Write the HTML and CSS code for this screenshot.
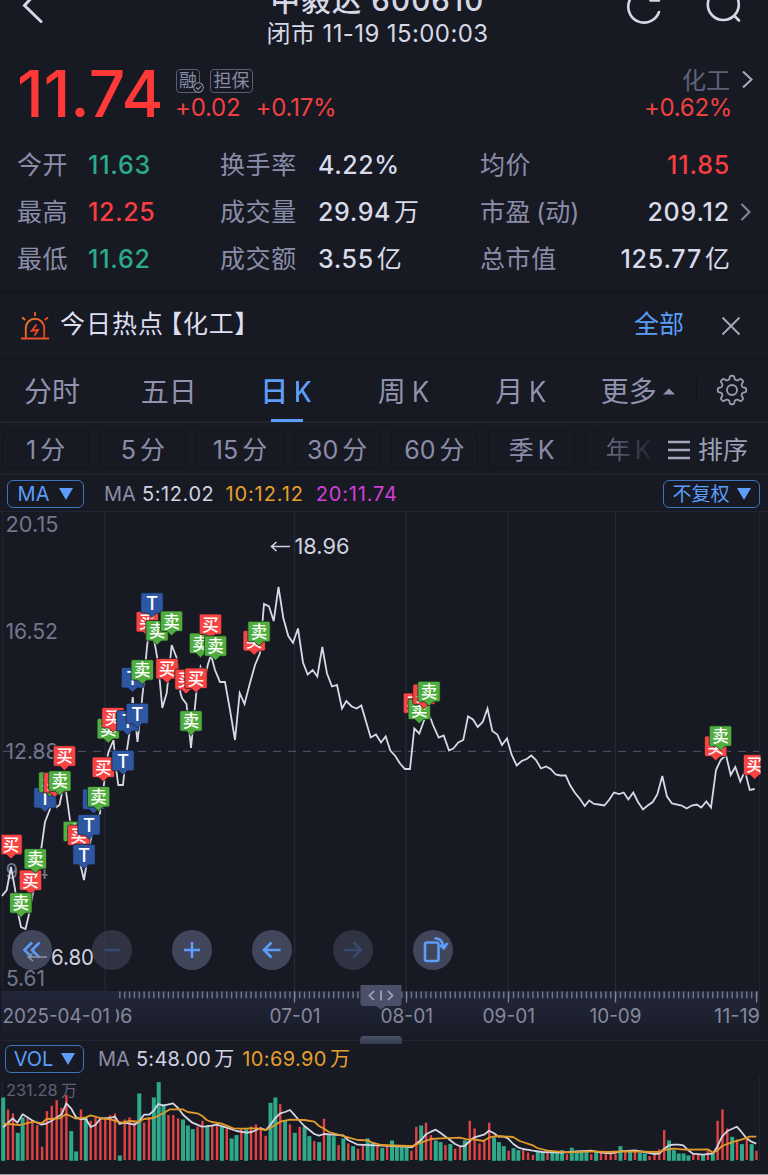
FILE: index.html
```html
<!DOCTYPE html>
<html lang="zh-CN">
<head>
<meta charset="utf-8">
<title>中毅达 600610</title>
<link rel="stylesheet" href="styles.css">
</head>
<body>
<div class="app">
  <header class="topbar">
    <svg class="icon-back" width="24" height="30" viewBox="0 0 24 30"><path d="M19 25.500 L2.500 9.500 L13 -2"/></svg>
    <div class="heading">
      <h1 class="title">中毅达 600610</h1>
      <p class="status">闭市 11-19 15:00:03</p>
    </div>
    <div class="top-actions">
      <svg width="36" height="26" viewBox="0 0 36 26"><path d="M33 12 A15.800 15.800 0 1 1 22 -8.500 M24.500 .500 H33"/></svg>
      <svg width="38" height="26" viewBox="0 0 38 26"><circle cx="19.300" cy="4.500" r="15.500"/><path d="M30.500 16 L35 20.500"/></svg>
    </div>
  </header>

  <section class="quote">
    <div class="price">11.74</div>
    <div class="change">
      <div class="badges">
        <span class="badge badge-margin">融<svg width="11" height="11" viewBox="0 0 11 11"><circle cx="5.500" cy="5.500" r="4.900"/><path d="M3 5.500 L5 7.300 L8 4"/></svg></span>
        <span class="badge">担保</span>
      </div>
      <div class="delta"><span>+0.02</span><span>+0.17%</span></div>
    </div>
    <div class="sector">
      <div class="sector-name">化工</div>
      <div class="sector-delta">+0.62%</div>
    </div>
    <svg class="chev" width="12" height="20" viewBox="0 0 12 20"><path d="M2 1.500 L10.500 9.500 L2 17.500"/></svg>
  </section>

  <section class="stats">
    <span class="label">今开</span><span class="val down">11.63</span>
    <span class="label">换手率</span><span class="val">4.22%</span>
    <span class="label">均价</span><span class="val right up">11.85</span><i></i>
    <span class="label">最高</span><span class="val up">12.25</span>
    <span class="label">成交量</span><span class="val">29.94<b>万</b></span>
    <span class="label">市盈<em>(动)</em></span><span class="val right">209.12</span>
    <svg class="chev chev-dim" width="12" height="20" viewBox="0 0 12 20"><path d="M1.500 2 L9.500 10 L1.500 18"/></svg>
    <span class="label">最低</span><span class="val down">11.62</span>
    <span class="label">成交额</span><span class="val">3.55<b>亿</b></span>
    <span class="label">总市值</span><span class="val right">125.77<b>亿</b></span><i></i>
  </section>

  <section class="hot">
    <svg class="siren" width="28" height="28" viewBox="0 0 28 28">
      <defs><linearGradient id="fire" x1="0" y1="0" x2="1" y2="1"><stop offset="0" stop-color="#f2802c"/><stop offset="1" stop-color="#e63a1c"/></linearGradient></defs>
      <g fill="none" stroke="url(#fire)" stroke-width="1.900">
        <path d="M4.800 26 V16 A9.200 9.200 0 0 1 23.200 16 V26"/>
        <path d="M1 5.500 L4.300 8 M27 5.500 L23.700 8"/>
      </g>
      <path d="M13.100 0 H15 V4 H13.100 Z M0 25.500 H28 V27.400 H0 Z" fill="#e8532a"/>
      <path d="M15.500 12.500 L10.800 18.800 L16.900 18 L13.500 23.500" fill="none" stroke="#f0441f" stroke-width="1.900"/>
    </svg>
    <span class="hot-title">今日热点<span class="bracket">【化工】</span></span>
    <a class="hot-all">全部</a>
    <svg class="close" width="20" height="20" viewBox="0 0 20 20"><path d="M1.500 1.500 L18.500 18.500 M18.500 1.500 L1.500 18.500"/></svg>
  </section>

  <nav class="tabs">
    <a class="tab">分时</a><a class="tab">五日</a><a class="tab active">日<span class="k">K</span></a><a class="tab">周<span class="k">K</span></a><a class="tab">月<span class="k">K</span></a>
    <a class="tab">更多<svg class="caret" width="12" height="7" viewBox="0 0 12 7"><path d="M0 6.500 L6 .500 L12 6.500 Z"/></svg></a>
    <span class="tab-sep"></span>
    <svg class="gear" id="gear" width="32" height="32" viewBox="-16 -16 32 32"><path/><circle r="5"/></svg>
  </nav>

  <nav class="periods">
    <div class="chips">
      <a class="chip">1<span class="k">分</span></a><a class="chip">5<span class="k">分</span></a><a class="chip">15<span class="k">分</span></a><a class="chip">30<span class="k">分</span></a><a class="chip">60<span class="k">分</span></a><a class="chip">季<span class="k">K</span></a><a class="chip chip-fade">年<span class="k">K</span></a>
    </div>
    <a class="sort"><svg width="22" height="20" viewBox="0 0 22 20"><path d="M0 2 H22 M0 10 H22 M0 18 H22"/></svg>排序</a>
  </nav>

  <div class="indicator">
    <span class="pill pill-ma">MA<i class="tri"></i></span>
    <span class="ma-values"><span class="c-label">MA</span><span class="c-white">5:12.02</span><span class="c-orange">10:12.12</span><span class="c-pink">20:11.74</span></span>
    <span class="pill pill-adj">不复权<i class="tri"></i></span>
  </div>

  <section class="kline">
    <svg id="kline" width="768" height="529" viewBox="0 511 768 529"></svg>
    <div class="tools">
      <button class="tool"><svg viewBox="0 0 40 40"><path d="M20 12.500 L12.500 20 L20 27.500 M27.500 12.500 L20 20 L27.500 27.500"/></svg></button>
      <button class="tool off"><svg viewBox="0 0 40 40"><path d="M12.500 20 H27.500"/></svg></button>
      <button class="tool"><svg viewBox="0 0 40 40"><path d="M12 20 H28 M20 12 V28"/></svg></button>
      <button class="tool"><svg viewBox="0 0 40 40"><path d="M28.500 20 H12.500 M19.500 12.500 L12 20 L19.500 27.500"/></svg></button>
      <button class="tool off"><svg viewBox="0 0 40 40"><path d="M11.500 20 H27.500 M20.500 12.500 L28 20 L20.500 27.500"/></svg></button>
      <button class="tool"><svg viewBox="0 0 40 40"><rect x="12" y="12.500" width="13.500" height="18.500" rx="2"/><path d="M21.500 8.300 C27 8.300 30 11.500 30.500 17.500 M27 15 L30.700 18.300 L34.500 13"/></svg></button>
    </div>
    <svg class="low-mark" width="74" height="28" viewBox="0 0 74 28"><path d="M25 12 H6 M11 8 L6 12 L11 16"/><text x="29" y="19.500" textLength="43" lengthAdjust="spacingAndGlyphs">6.80</text></svg>
  </section>

  <section class="volume">
    <span class="grip"></span>
    <div class="indicator vol-head">
      <span class="pill pill-vol">VOL<i class="tri"></i></span>
      <span class="ma-values vol-values"><span class="c-label">MA</span><span class="c-white">5:48.00<b>万</b></span><span class="c-orange">10:69.90<b>万</b></span></span>
    </div>
    <svg id="vol" width="768" height="98" viewBox="0 1076 768 98"></svg>
  </section>
</div>
<script src="chart.js"></script>
</body>
</html>
```

FILE: styles.css
```css
* { box-sizing: border-box; }
body {
  margin: 0;
  background: #171a23;
  color: #d6d8e6;
  font-family: Inter, "Noto Sans CJK SC", sans-serif;
  overflow: hidden;
}
.app { width: 768px; height: 1175px; display: flex; flex-direction: column; border-bottom: 1px solid #98989c; overflow: hidden; }
svg { display: block; flex: none; }
h1, p { margin: 0; font-weight: 400; }
i, em { font-style: normal; }
b { font-weight: inherit; margin-left: 3px; letter-spacing: 0; }

.topbar { height: 56px; flex: none; display: grid; grid-template-columns: 200px 1fr 200px; overflow: hidden; }
.icon-back { margin: -4px 0 0 22px; fill: none; stroke: #d6d8e6; stroke-width: 3; stroke-linecap: round; }
.heading { display: flex; flex-direction: column; align-items: center; margin-left: -13px; }
.title { font-size: 29.500px; line-height: 36px; margin: -18px 0 1px; font-weight: 500; white-space: nowrap; letter-spacing: 1.100px; }
.status { font-size: 24px; line-height: 30px; white-space: nowrap; letter-spacing: .4px; }
.top-actions { display: flex; gap: 42px; padding-left: 58px; }
.top-actions svg { fill: none; stroke: #d6d8e6; stroke-width: 2.6; stroke-linecap: round; }

.quote { height: 82px; flex: none; display: flex; padding: 0 15px 0 17px; }
.price { font-size: 64px; line-height: 76px; font-weight: 500; color: #ff3838; width: 159px; letter-spacing: .1px; white-space: nowrap; }
.change { flex: 1; padding-top: 13px; }
.badges { display: flex; gap: 10px; }
.badge { position: relative; height: 24px; border: 1px solid #5a5d73; border-radius: 4px; color: #8a8ca4; font-size: 18px; line-height: 22px; padding: 0 2.500px; }
.badge-margin { width: 24px; padding: 0 2px; }
.badge-margin svg { position: absolute; right: -5px; bottom: -1px; background: #171a23; border-radius: 6px; fill: none; stroke: #8a8ca4; stroke-width: 1.2; }
.delta { display: flex; gap: 15px; color: #f04040; font-size: 24px; line-height: 29px; letter-spacing: -.2px; margin-left: -1px; }
.sector { text-align: right; padding-top: 11px; margin-right: 9px; line-height: 27px; font-size: 24px; }
.sector-name { color: #60627c; margin-right: 2px; }
.sector-delta { color: #f04040; letter-spacing: -.3px; }
.chev { fill: none; stroke: #a9abbc; stroke-width: 2; margin-top: 14px; }
.chev-dim { margin: 0 0 0 10px; stroke: #85879c; }

.stats { height: 152px; flex: none; padding: 3px 6px 8px 17px; display: grid; grid-template-columns: 71px 132px 98px 162px 100px 150px 32px; grid-template-rows: repeat(3, 47px); align-items: center; }
.label { font-size: 25px; color: #8b8da8; white-space: nowrap; line-height: 36px; letter-spacing: .6px; }
.label em { margin-left: 5px; letter-spacing: 0; }
.val { font-size: 25px; font-weight: 500; color: #d9dbea; white-space: nowrap; line-height: 36px; letter-spacing: .6px; }
.right { text-align: right; letter-spacing: .8px; }
.up { color: #f83e40; }
.down { color: #2cab8b; letter-spacing: .8px; }
.val b { font-weight: 400; }

.hot { height: 69px; flex: none; border-top: 3px solid #12151d; border-bottom: 1px solid #10131a; display: flex; align-items: center; padding: 0 27px 0 21px; }
.hot-title { margin-left: 11px; font-size: 25px; line-height: 36px; margin-top: -4px; color: #dddff0; letter-spacing: 1px; flex: 1; }
.bracket { margin-left: -6.500px; letter-spacing: .6px; }
.hot-all { color: #5b9df8; font-size: 25px; line-height: 36px; margin: -4px 37px 0 0; }
.close { fill: none; stroke: #a6a8b8; stroke-width: 1.9; }

.tabs { height: 64px; flex: none; display: flex; align-items: center; border-bottom: 2px solid #222530; }
.tab { width: 117.300px; height: 64px; line-height: 69px; text-align: center; font-size: 28px; color: #9193ae; position: relative; flex: none; white-space: nowrap; }
.tab:first-child { width: 104px; margin-right: 6px; }
.tab .k { margin-left: 6px; display: inline-block; transform: scaleX(.92); transform-origin: left; margin-right: -2px; }
.tab.active { color: #5b9df8; font-weight: 500; }
.tab.active::after { content: ""; position: absolute; left: 44px; bottom: 0; width: 32px; height: 3px; background: #5b9df8; }
.caret { display: inline-block; vertical-align: 7px; margin-left: 6px; fill: #9193ae; }
.tab-sep { width: 1px; height: 22px; background: #10131a; }
.gear { margin-left: 19px; fill: none; stroke: #9c9eb0; stroke-width: 1.800; }

.periods { height: 52px; flex: none; display: flex; align-items: center; padding-top: 3px; border-bottom: 2px solid #20232e; overflow: hidden; }
.chips { display: flex; gap: 10px; padding-left: 2px; width: 662px; flex: none; overflow: hidden; }
.chip { width: 87.200px; height: 39px; line-height: 39px; flex: none; border: 1px solid #11141b; border-radius: 6px; text-align: center; color: #8b8da8; font-size: 25px; white-space: nowrap; }
.chip .k { margin-left: 4px; }
.chip-fade { -webkit-mask-image: linear-gradient(90deg, #000 0, transparent 85%); mask-image: linear-gradient(90deg, #000 0, transparent 85%); }
.sort { display: flex; align-items: center; gap: 8px; padding-left: 6px; color: #9d9fb5; font-size: 25px; line-height: 36px; }
.sort svg { stroke: #a4a6ba; stroke-width: 2.600; }

.indicator { height: 36px; flex: none; display: flex; align-items: center; padding: 2px 8px 0 7px; }
.pill { height: 28px; border: 1.500px solid #3f74bd; border-radius: 6px; color: #5b9df8; font-size: 20px; display: flex; align-items: center; justify-content: center; }
.tri { border: 7.500px solid transparent; border-top: 12px solid #5b9df8; border-bottom: 0; }
.pill-ma { width: 77px; gap: 10px; }
.pill-adj { width: 97px; gap: 7px; font-size: 19px; line-height: 27px; margin-left: auto; }
.ma-values { display: flex; align-items: baseline; margin-left: 20px; font-size: 20px; line-height: 26px; white-space: nowrap; letter-spacing: .6px; }
.c-label { color: #8b8da8; margin-right: 6px; letter-spacing: 0; }
.c-white { color: #d0d2e2; margin-right: 11px; }
.c-orange { color: #e5a02c; margin-right: 12px; letter-spacing: .9px; }
.c-pink { color: #d23fd8; letter-spacing: .8px; }

.kline { position: relative; height: 529px; flex: none; }
.tools { position: absolute; left: 11.500px; top: 418.500px; display: flex; gap: 40.300px; }
.tool { width: 40px; height: 40px; padding: 0; border: 0; border-radius: 50%; background: rgba(78, 83, 107, .78); }
.tool svg { width: 40px; height: 40px; fill: none; stroke: #5b9df8; stroke-width: 2.600; }
.tool.off { background: rgba(64, 68, 86, .6); }
.tool.off svg { stroke: #394a72; }
.low-mark { position: absolute; left: 22px; top: 434px; fill: #d0d2de; font-size: 22px; }
.low-mark path { fill: none; stroke: #8d90a0; stroke-width: 1.500; }

.volume { position: relative; height: 134px; flex: none; border-top: 1px solid #222530; }
.grip { position: absolute; left: 360px; top: -5px; width: 42px; height: 8px; border-radius: 4px 4px 0 0; background: linear-gradient(#4a5067, #343a4e); }
.vol-head { padding: 0 8px 0 5px; height: 35px; }
.pill-vol { width: 79px; gap: 8px; }
.vol-values { margin-left: 14px; letter-spacing: .3px; }
.vol-values .c-white { margin-right: 8px; }
.vol-values .c-orange { letter-spacing: .4px; }
```

FILE: chart.js
```javascript
const NS = 'http://www.w3.org/2000/svg';
function add(parent, tag, attrs, text) {
  const el = document.createElementNS(NS, tag);
  for (const k in attrs) el.setAttribute(k, attrs[k]);
  if (text !== undefined) el.textContent = text;
  parent.appendChild(el);
  return el;
}
function label(parent, x, y, width, fill, size, text) {
  return add(parent, 'text', { x, y, fill, 'font-size': size, textLength: width, lengthAdjust: 'spacingAndGlyphs' }, text);
}
const STEP = 4.86, X0 = 3.2;

/* Settings gear outline */
(function () {
  const pts = [];
  for (let i = 0; i <= 160; i++) {
    const a = i / 160 * Math.PI * 2;
    const r = 12.5 + 1.8 * Math.tanh(2.2 * Math.cos(8 * a));
    pts.push((r * Math.sin(a)).toFixed(2) + ' ' + (-r * Math.cos(a)).toFixed(2));
  }
  document.querySelector('#gear path').setAttribute('d', 'M' + pts.join('L') + 'Z');
})();

/* Price chart */
const k = document.getElementById('kline');
const defs = add(k, 'defs', {});
const grad = add(defs, 'linearGradient', { id: 'band', x1: 0, y1: 0, x2: 0, y2: 1 });
add(grad, 'stop', { offset: 0, 'stop-color': '#23273a' });
add(grad, 'stop', { offset: 1, 'stop-color': '#181b26' });
const clip = add(defs, 'clipPath', { id: 'plot' });
add(clip, 'rect', { x: 1.5, y: 511, width: 759, height: 480 });
const clipDate = add(defs, 'clipPath', { id: 'date' });
add(clipDate, 'rect', { x: 116, y: 1000, width: 30, height: 30 });

add(k, 'path', { d: 'M0 511.500H768M2.500 511V991M759.500 511V991', stroke: '#222531', fill: 'none' });
add(k, 'path', { d: 'M105 511V991M294.500 511V991M406 511V991M508 511V991M615.500 511V991', stroke: '#262936', fill: 'none', 'stroke-width': 1.3 });
add(k, 'path', { d: 'M3 751.300H759', stroke: '#494c5f', fill: 'none', 'stroke-width': 1.3, 'stroke-dasharray': '8 7' });

label(k, 5.5, 532, 53, '#73768b', 22, '20.15');
label(k, 5.5, 639, 52.5, '#73768b', 22, '16.52');
label(k, 5.5, 759, 53, '#73768b', 22, '12.88');
label(k, 5.5, 879, 43, '#73768b', 22, '9.24');
label(k, 6, 986, 39, '#73768b', 22, '5.61');
label(k, 294.5, 554, 55, '#cfd1dd', 22, '18.96');
add(k, 'path', { d: 'M290 546.500H271.500M276.500 542L271.500 546.500L276.500 551', stroke: '#cfd1dd', fill: 'none', 'stroke-width': 1.6 });

const price = '2,896 6.700,890 11,867 15,889 18.500,915 21,927 25.500,929 28.600,916 33,893 36,880 41.500,847 45,822 50,809 54,800 56.500,807 59.500,805 62,793 64.500,781 66.500,795 70,820 75,838 80,863 84,880 88,855 91,838 95,826 100,813 104,784 106,764 108.500,752 113.500,740 116,768 118.300,785 123,785 126,756 129.500,733 132.700,697 137.500,742 140.500,715 143,690 147,647 150,622 152,632 155,645 158,662 162.300,708 166.700,693 171.700,645 176.700,658 180.500,693 182,698 186.500,704 191,748 196.500,691 200.500,667 205,678 208,664 211,655 215,670 220,682 225,682 230,710 235,740 239.700,693 244.500,704 250,683 255,665 260,653 264,604 269,606.500 273.700,621 278.500,587 283.300,618 288.300,636 293,642.700 298,628.500 303,662.500 307.700,674.500 312.700,670 317.300,676.500 322.300,647 327,673.500 332,686.500 337,685 342,708.500 346.300,701 351.700,706.500 356.700,708.500 361.300,705.500 366,721.500 370.700,737.500 376,734.500 381,742.500 385.700,736.500 390.300,750.500 395.300,756 400,763.500 405,769 410,769 414.300,728.500 419.300,733.500 424,720.500 429,714 433,725 438.700,737.500 443.700,735.500 449,750.500 453.300,748.500 458.300,742.500 463.300,740 468,716.500 473,719.500 477.700,727 482.700,722 487.500,708.500 492.300,731 497.300,734.500 502,745 507,738.500 511.700,755 516.700,765.500 521.700,761 526.700,759 531.300,755.500 536,760 541,768.500 546,766.500 550.700,769 555.700,774.500 560.300,775.500 565.700,775.500 570,785 574.700,792.500 580,799 584.700,806 589.300,800.500 594,804 599,804.500 604.300,805.500 609,800 614,792.500 619,794 623.700,792.500 628.300,799.500 633.300,792.500 638,802 643,809.500 647.700,805.500 652.700,802 657.300,794.500 662.300,776 667,796.500 672,803.500 681.700,805.500 686.700,808.500 691.700,805.500 696.700,804.500 701.300,807.500 706.300,801.500 711,807.500 716,770 720.700,760 726,755 730.700,775 735.300,767 740.300,781.500 745,771 749.700,790 754.700,789';
add(k, 'polyline', { points: price, fill: 'none', stroke: '#d7d9e6', 'stroke-width': 1.8 });

/* Trade markers: kind, centre x, top y; B = buy, S = sell, T = both in one day */
const kinds = { B: ['#f94444', '买'], S: ['#4fae3d', '卖'], T: ['#2d56a3', 'T'] };
const marks = [
  ['B', 11, 834.3], ['B', 30.5, 870], ['S', 35.3, 848.7], ['S', 20.8, 892.7],
  ['T', 45, 787.5], ['S', 49.8, 772], ['B', 54.8, 772.5], ['S', 59.8, 770.8], ['B', 64.5, 745.8],
  ['S', 74.3, 821.2], ['B', 78.8, 825], ['T', 89, 814.5], ['T', 84, 844.3],
  ['T', 93.7, 789], ['S', 98.6, 786.5], ['B', 103.3, 757],
  ['S', 108.3, 718.5], ['B', 113, 707.5], ['T', 127.7, 710.5], ['T', 137.3, 703.3], ['T', 123, 750.3],
  ['T', 132.5, 667.5], ['S', 142.3, 659.7],
  ['B', 147.3, 611.5], ['T', 152, 592.8], ['S', 157, 620.5], ['S', 171.5, 611], ['B', 167, 658.5],
  ['B', 186, 669.3], ['B', 196, 668], ['S', 191, 710.7],
  ['S', 200.5, 633], ['B', 210.5, 614], ['S', 215.5, 635.8],
  ['B', 254.2, 630.5], ['S', 259, 621.3],
  ['B', 414.5, 693], ['S', 419.3, 699], ['B', 424, 684], ['S', 429, 681.3],
  ['B', 715.7, 736], ['S', 720.5, 725.8], ['B', 754.6, 754.6]
];
const layer = add(k, 'g', { 'clip-path': 'url(#plot)' });
for (const [kind, cx, y] of marks) {
  const [color, glyph] = kinds[kind];
  const g = add(layer, 'g', { transform: `translate(${cx} ${y})` });
  add(g, 'path', { d: 'M-9.500 0H9.500Q11.200 0 11.200 1.700V18.800Q11.200 20.500 9.500 20.500H4.500L0 24.700L-4.500 20.500H-9.500Q-11.200 20.500 -11.200 18.800V1.700Q-11.200 0 -9.500 0Z', fill: color, stroke: '#171a23', 'stroke-width': .7 });
  add(g, 'text', { x: 0, y: kind === 'T' ? 17.2 : 16.6, 'text-anchor': 'middle', fill: '#fff', 'font-size': kind === 'T' ? 18.5 : 16.5, 'font-weight': 500 }, glyph);
}

/* Time ruler */
add(k, 'rect', { x: 1.5, y: 991, width: 758, height: 48, fill: 'url(#band)' });
let ticks = '';
for (let i = 24; i <= 155; i++) ticks += `M${(X0 + STEP * i).toFixed(2)} 991.500V998.300`;
add(k, 'path', { d: ticks, stroke: '#74788c', fill: 'none', 'stroke-width': 1.4 });
add(k, 'path', { d: 'M294.500 991.500V1002.500M406.500 991.500V1002.500M508.400 991.500V1002.500M615.500 991.500V1002.500M756.600 991.500V1002.500', stroke: '#82869a', fill: 'none', 'stroke-width': 1.3 });
const dates = [[2.5, 107.5, '2025-04-01'], [269.5, 51, '07-01'], [380.5, 52.5, '08-01'], [482.5, 52.5, '09-01'], [589.5, 52, '10-09'], [714, 46, '11-19']];
for (const [x, w, t] of dates) label(k, x, 1023, w, '#85889c', 20, t);
add(add(k, 'g', { 'clip-path': 'url(#date)' }), 'text', { x: 132.5, y: 1023, 'text-anchor': 'end', fill: '#85889c', 'font-size': 20 }, '06');
add(k, 'path', { d: 'M360.500 985H401.500V1003Q401.500 1006 398.500 1006H386L381 1009.500L376 1006H363.500Q360.500 1006 360.500 1003Z', fill: '#4b5068' });
add(k, 'path', { d: 'M374 991L369.500 995.500L374 1000M388 991L392.500 995.500L388 1000M381 990.500V1000.500', stroke: '#a3a6b8', 'stroke-width': 1.7, fill: 'none' });

/* Volume: colour letter and bar height in thirds of a pixel */
const v = document.getElementById('vol');
const vols = 'G190 R154 R142 G84 G130 R127 R122 R107 R42 R149 R165 R182 R159 R197 G89 G28 R154 G130 R120 R130 R130 R130 R137 R142 G16 R124 R130 R117 G202 R115 R130 G190 G236 G170 R137 R137 R127 G124 G106 G95 R102 R120 G107 R107 R107 G102 R97 G67 G77 R97 G95 R103 R109 R95 R75 G174 G190 R170 G122 R109 G84 R102 G102 G74 R59 G56 R126 G77 G74 R47 G67 R52 G44 R36 R47 G67 G54 R47 G39 R47 G61 G47 G44 G44 R30 R102 G106 R114 R77 G61 G56 R47 G50 R36 R44 G61 R120 R97 R52 R59 R114 G70 G56 G44 R30 G38 G32 R32 R25 R18 G30 G26 R28 G26 G26 G32 R20 G39 G32 G32 G32 R20 G26 R26 R26 R26 R30 G44 R26 G28 R28 G24 G22 R14 R22 R35 R92 G61 G32 G22 G22 G16 R22 R18 G18 R30 G24 R120 R154 R97 G72 R64 G50 R67 G50 R30'.split(' ');
add(v, 'path', { d: 'M2.500 1076V1161M759.500 1076V1161', stroke: '#222531', fill: 'none' });
label(v, 6, 1096, 51.5, '#5e6175', 16, '231.28');
label(v, 61, 1096, 16, '#5e6175', 16, '万');
vols.forEach((s, i) => {
  const h = +s.slice(1) / 3, up = s[0] === 'R', w = up ? 2.4 : 4;
  add(v, 'rect', { x: X0 + STEP * i - w / 2, y: 1160.8 - h, width: w, height: h - (up ? .8 : 0), fill: up ? '#e24242' : '#2fa98a' });
});
function line(color, segs) {
  const pts = segs.flatMap(([ox, list]) => list.split(' ').map(p => {
    const [x, y] = p.split(',').map(Number);
    return (ox + x / 3).toFixed(1) + ',' + (1030 + y / 3).toFixed(1);
  }));
  add(v, 'polyline', { points: pts.join(' '), fill: 'none', stroke: color, 'stroke-width': 1.8, 'stroke-linejoin': 'round' });
}
line('#d3d5e2', [
  [0, '10,292 38,265 52,278 68,253 96,271 125,284 140,280 155,272 185,253 199,220 214,236 228,262 243,268 257,266 272,291 286,285 301,266 330,264 345,260 359,282 374,278 403,284 417,275 432,254 447,254 461,242 475,222 490,227 519,220 534,234 550,255 577,278 605,290 620,289 635,287 650,284 680,293 710,303 740,308 755,306'],
  [250, '18,300 32,294 47,300 61,285 76,264 91,250 105,246 120,240 135,257 149,273 163,288 178,300 193,312 207,317 222,312 280,316 294,330 323,344 470,350 486,352 498,342 513,330 528,313 543,305 557,299 571,308 600,330 615,342 630,349 644,348 659,333 673,322 702,314 717,302 732,310 746,320 762,320'],
  [508, '0,325 16,342 30,352 45,357 74,362 103,366 160,368 250,362 280,368 310,370 337,364 380,361 410,366 440,372 454,371 468,357 483,346 497,344 512,344 526,346 541,361 555,371 585,374 615,370 628,350 642,320 657,304 686,290 700,305 715,324 730,335 745,341']
]);
line('#e39a2b', [
  [0, '10,281 60,285 100,275 125,280 140,267 180,265 199,252 228,266 257,262 272,256 301,264 330,268 365,278 390,273 417,275 432,267 461,264 490,250 510,238 548,238 563,246 592,250 607,258 620,270 635,276 665,281 700,295 735,296'],
  [250, '0,295 20,295 47,300 61,294 91,275 120,269 163,270 193,275 207,288 222,296 237,306 265,314 294,322 323,330 353,331 367,338 395,345 470,348 486,348 513,338 543,327 571,325 630,323 650,328 673,328 700,333 720,322 740,318 765,320'],
  [508, '0,320 15,321 35,333 74,346 88,354 118,362 180,367 250,364 300,366 350,364 454,366 468,360 497,356 530,359 600,358 615,368 628,362 642,348 671,337 700,329 725,320 745,320']
]);
```
